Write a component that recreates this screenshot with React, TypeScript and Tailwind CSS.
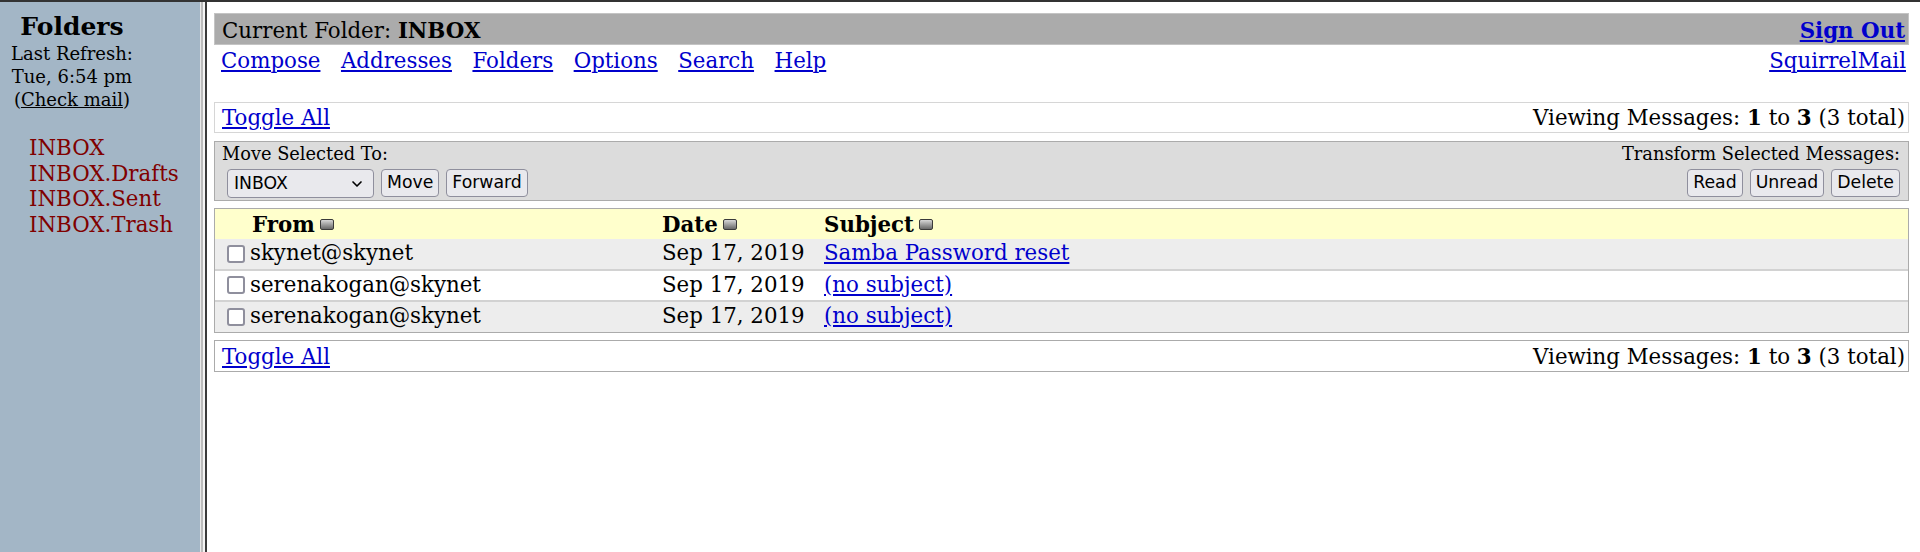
import { ChevronDown } from "lucide-react";

const folders = ["INBOX", "INBOX.Drafts", "INBOX.Sent", "INBOX.Trash"];

const messages = [
  { from: "skynet@skynet", date: "Sep 17, 2019", subject: "Samba Password reset", shade: true },
  { from: "serenakogan@skynet", date: "Sep 17, 2019", subject: "(no subject)", shade: false },
  { from: "serenakogan@skynet", date: "Sep 17, 2019", subject: "(no subject)", shade: true },
];

const navLinks = ["Compose", "Addresses", "Folders", "Options", "Search", "Help"];

function SortIcon() {
  return (
    <span className="ml-[5px] inline-block h-[11px] w-[14px] rounded-[2px] border border-[#3a3a3a] bg-gradient-to-b from-[#d8d8d8] to-[#6a6a6a]" />
  );
}

function Btn({ label }: { label: string }) {
  return (
    <button
      type="button"
      className="h-[28px] rounded-[4px] border border-[#8f8f9d] bg-[#e9e9ed] px-[5px] font-['DejaVu_Sans',sans-serif] text-[17.3px] leading-none text-black"
    >
      {label}
    </button>
  );
}

function ToggleBar({ light }: { light?: boolean }) {
  return (
    <div
      className={
        light
          ? "flex h-[31px] items-center justify-between border border-[#d6d6d6] bg-white pl-[7px] pr-[3px]"
          : "flex h-[32px] items-center justify-between border border-[#ababab] bg-white pl-[7px] pr-[3px]"
      }
    >
      <a href="#" className="text-[#0000cc] underline">
        Toggle All
      </a>
      <span>
        Viewing Messages: <b>1</b> to <b>3</b> (3 total)
      </span>
    </div>
  );
}

export default function App() {
  return (
    <div className="flex h-[552px] w-[1920px] overflow-hidden border-t-2 border-[#333] bg-white font-['DejaVu_Serif',serif] text-[21.33px] leading-[25px] text-black">
      {/* left frame */}
      <aside className="w-[200px] shrink-0 bg-[#a3b6c6] pl-[11px] pt-[10px]">
        <div className="w-fit text-center">
          <div className="text-[25px] font-bold leading-[30px]">Folders</div>
          <div className="text-[18px] leading-[23px]">
            Last Refresh:
            <br />
            Tue, 6:54 pm
            <br />
            (<a href="#" className="text-black underline">Check mail</a>)
          </div>
        </div>
        <ul className="mt-[24px] pl-[18px] leading-[25.7px] text-[#800000]">
          {folders.map((f) => (
            <li key={f}>{f}</li>
          ))}
        </ul>
      </aside>

      {/* frame border */}
      <div className="flex shrink-0">
        <div className="w-px bg-[#e8e8e8]" />
        <div className="w-[2px] bg-[#bcbcbc]" />
        <div className="w-[2px] bg-[#f4f4f4]" />
        <div className="w-[2px] bg-[#3a3a3a]" />
      </div>

      {/* right frame */}
      <main className="flex-1 pl-[7px] pr-[11px] pt-[11px]">
        <div className="flex h-[32px] items-center justify-between border border-[#c4c4c4] bg-[#ababab] pl-[7px] pr-[3px] pt-[3px]">
          <span>
            Current Folder: <b>INBOX</b>
          </span>
          <a href="#" className="font-bold text-[#0000cc] underline">
            Sign Out
          </a>
        </div>
        <div className="flex h-[30px] items-center justify-between pl-[7px] pr-[3px]">
          <nav className="flex gap-[20.5px]">
            {navLinks.map((l) => (
              <a key={l} href="#" className="text-[#0000cc] underline">
                {l}
              </a>
            ))}
          </nav>
          <a href="#" className="text-[#0000cc] underline">
            SquirrelMail
          </a>
        </div>

        <div className="mt-[27px]">
          <ToggleBar light />
        </div>

        {/* move / transform */}
        <div className="mt-[8px] flex justify-between border border-[#ababab] bg-[#dcdcdc] pb-[2px] pl-[7px] pr-[8px] pt-[1px]">
          <div>
            <div className="text-[17.8px] leading-[21px]">Move Selected To:</div>
            <div className="mt-[5px] flex gap-[7px] pl-[5px]">
              <div className="flex h-[29px] w-[147px] items-center justify-between rounded-[4px] border border-[#8f8f9d] bg-[#e9e9ed] pl-[6px] pr-[8px] font-['DejaVu_Sans',sans-serif] text-[17.3px]">
                INBOX
                <ChevronDown size={16} strokeWidth={2.5} />
              </div>
              <Btn label="Move" />
              <Btn label="Forward" />
            </div>
          </div>
          <div className="flex flex-col items-end">
            <div className="text-[17.8px] leading-[21px]">Transform Selected Messages:</div>
            <div className="mt-[5px] flex gap-[7px]">
              <Btn label="Read" />
              <Btn label="Unread" />
              <Btn label="Delete" />
            </div>
          </div>
        </div>

        {/* message list */}
        <div className="mt-[7px] border border-[#ababab]">
          <div className="grid h-[30px] grid-cols-[447px_162px_1fr] items-center bg-[#ffffcc] font-bold">
            <span className="flex items-center pl-[37px]">
              From
              <SortIcon />
            </span>
            <span className="flex items-center">
              Date
              <SortIcon />
            </span>
            <span className="flex items-center">
              Subject
              <SortIcon />
            </span>
          </div>
          {messages.map((m, i) => (
            <div key={i}>
              {i > 0 && <div className="h-[2px] bg-[#d2d2d2]" />}
              <div
                className={
                  m.shade
                    ? "grid h-[30px] grid-cols-[447px_162px_1fr] items-center bg-[#ededed] pb-[3px]"
                    : "grid h-[29px] grid-cols-[447px_162px_1fr] items-center bg-white pb-[3px]"
                }
              >
                <span className="flex items-center gap-[5px] pl-[12px]">
                  <span className="mt-[2px] inline-block h-[18px] w-[18px] shrink-0 rounded-[3px] border-2 border-[#8f8f9d] bg-white" />
                  {m.from}
                </span>
                <span>{m.date}</span>
                <a href="#" className="text-[#0000cc] underline">
                  {m.subject}
                </a>
              </div>
            </div>
          ))}
        </div>

        <div className="mt-[7px]">
          <ToggleBar />
        </div>
      </main>
    </div>
  );
}
